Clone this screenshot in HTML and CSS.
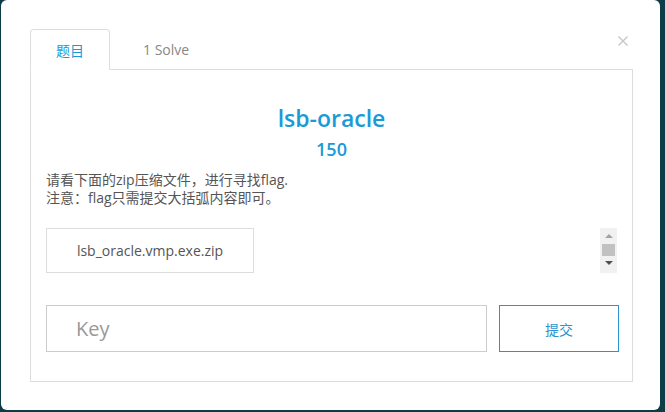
FILE: index.html
```html
<!DOCTYPE html>
<html lang="zh">
<head>
<meta charset="utf-8">
<title>lsb-oracle</title>
<link rel="stylesheet" href="styles.css">
</head>
<body>
<div class="modal">
  <span class="close" aria-label="close">
    <svg width="10" height="10" viewBox="0 0 10 10"><path d="M0.5 0.5 L9.5 9.5 M9.5 0.5 L0.5 9.5" stroke="#c6c6c6" stroke-width="1.4" fill="none"/></svg>
  </span>
  <ul class="tabs">
    <li class="tab active">题目</li>
    <li class="tab">1 Solve</li>
  </ul>
  <div class="pane">
    <h1 class="title">lsb-oracle</h1>
    <div class="points">150</div>
    <div class="desc">
      <p>请看下面的zip压缩文件，进行寻找flag.</p>
      <p>注意：flag只需提交大括弧内容即可。</p>
    </div>
    <div class="files">
      <div class="file-list">
        <a class="file">lsb_oracle.vmp.exe.zip</a>
      </div>
      <div class="scrollbar">
        <span class="arrow up"></span>
        <span class="thumb"></span>
        <span class="arrow down"></span>
      </div>
    </div>
    <form class="submit-row">
      <input class="key" type="text" placeholder="Key">
      <button class="submit" type="button">提交</button>
    </form>
  </div>
</div>
</body>
</html>
```
FILE: styles.css
```css
html, body {
  margin: 0;
  padding: 0;
}
body {
  background: #0c3d47;
  width: 665px;
  height: 412px;
  overflow: hidden;
  font-family: "Open Sans", "Noto Sans CJK SC", sans-serif;
  padding-left: 1px;
  box-sizing: border-box;
}
.modal {
  position: relative;
  width: 659px;
  height: 410px;
  background: #fff;
  border-radius: 6px;
  padding: 29px 27px 0 29px;
  box-sizing: border-box;
}
.close {
  position: absolute;
  left: 617px;
  top: 36px;
  width: 10px;
  height: 10px;
  display: block;
}
.close svg { display: block; }
.tabs {
  list-style: none;
  margin: 0;
  padding: 0;
  display: flex;
  height: 40px;
  border-bottom: 1px solid #ddd;
}
.tab {
  height: 40px;
  box-sizing: border-box;
  padding: 0 25px;
  display: flex;
  align-items: center;
  font-size: 14px;
  color: #888;
  border: 1px solid transparent;
  border-radius: 4px 4px 0 0;
  margin-bottom: -1px;
}
.tab + .tab {
  margin-left: 7px;
}
.tab.active {
  color: #1a9ad6;
  background: #fff;
  border-color: #ddd;
  border-bottom-color: #fff;
  height: 41px;
  width: 80px;
  justify-content: center;
  padding: 0;
}
.pane {
  border: 1px solid #ddd;
  border-top: none;
  padding: 33px 15px 29px 15px;
}
.title {
  margin: 0;
  text-align: center;
  font-size: 23px;
  line-height: 30px;
  font-weight: 600;
  color: #1a9ad6;
}
.points {
  margin-top: 4px;
  text-align: center;
  font-size: 18px;
  line-height: 24px;
  font-weight: 600;
  color: #1a9ad6;
}
.desc {
  margin-top: 10px;
  font-size: 14px;
  line-height: 18px;
  color: #555;
}
.desc p {
  margin: 0;
}
.files {
  margin-top: 21px;
  height: 45px;
  display: flex;
  justify-content: space-between;
}
.file {
  display: flex;
  align-items: center;
  justify-content: center;
  width: 208px;
  height: 45px;
  box-sizing: border-box;
  border: 1px solid #ddd;
  font-size: 14px;
  color: #555;
}
.scrollbar {
  width: 17px;
  height: 45px;
  background: #f1f1f1;
  display: flex;
  flex-direction: column;
  align-items: center;
}
.arrow {
  width: 0;
  height: 0;
  border-left: 4px solid transparent;
  border-right: 4px solid transparent;
}
.arrow.up {
  margin-top: 6px;
  border-bottom: 4px solid #a3a3a3;
}
.thumb {
  margin-top: 6px;
  width: 13px;
  height: 12px;
  background: #c1c1c1;
}
.arrow.down {
  margin-top: 5px;
  border-top: 4px solid #505050;
}
.submit-row {
  margin: 32px -3px 0 0;
  display: flex;
  gap: 12px;
  height: 47px;
}
.key {
  width: 441px;
  height: 47px;
  box-sizing: border-box;
  border: 1px solid #ccc;
  padding: 0 0 0 29px;
  font-family: "Open Sans", "Noto Sans CJK SC", sans-serif;
  font-size: 20px;
  color: #555;
  outline: none;
}
.key::placeholder {
  color: #999;
}
.submit {
  width: 120px;
  height: 47px;
  box-sizing: border-box;
  border: 1px solid #2a94d1;
  background: #fff;
  color: #2a94d1;
  font-family: "Open Sans", "Noto Sans CJK SC", sans-serif;
  font-size: 14px;
  padding: 0;
}
```
